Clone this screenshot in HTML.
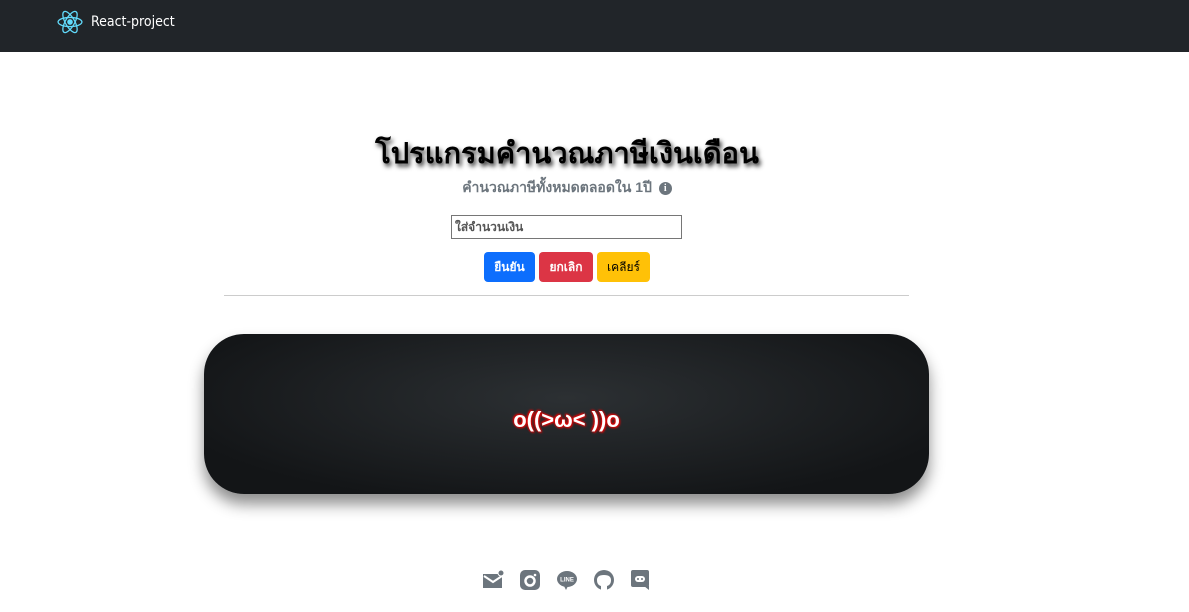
<!DOCTYPE html>
<html><head><meta charset="utf-8">
<style>
*{box-sizing:border-box;margin:0;padding:0}
body{width:1189px;height:612px;overflow:hidden;background:#fff;font-family:"Liberation Sans","Noto Sans CJK SC",sans-serif}
nav{height:52px;background:#212529;position:relative}
nav .brand{position:absolute;left:57px;top:10px;display:flex;align-items:center;color:#fff;font-size:14px}
nav .brand span{margin-left:8px;font-family:"DejaVu Sans Condensed","Liberation Sans",sans-serif}
h1{position:absolute;top:130px;left:0;width:1134px;text-align:center;font-size:29px;font-weight:bold;color:#000;text-shadow:2px 3px 5px rgba(0,0,0,.8)}
.sub{position:absolute;top:177px;width:1134px;text-align:center;color:#6c757d;font-size:14px;font-weight:bold}
.info{display:inline-block;width:13px;height:13px;border-radius:50%;background:#6c757d;color:#fff;font-size:10px;line-height:13px;text-align:center;vertical-align:1px;margin-left:3px;font-family:"Liberation Serif",serif}
input{position:absolute;left:451px;top:215px;width:231px;height:24px;border:1px solid #767676;font-size:12px;padding-left:3px;color:#555;font-weight:bold}
.btns{position:absolute;top:252px;left:484px;display:flex;gap:4px}
.btns div{height:30px;border-radius:4px;color:#fff;font-size:12px;font-weight:bold;line-height:30px;text-align:center}
hr{position:absolute;top:295px;left:224px;width:685px;border:0;border-top:1px solid #ccc}
.board{position:absolute;left:204px;top:334px;width:725px;height:160px;border-radius:40px;background:radial-gradient(ellipse at 50% 40%,#2c3033,#131517 80%);box-shadow:0 10px 15px rgba(0,0,0,.45);display:flex;align-items:center;justify-content:center;color:#fff;font-size:22px;font-weight:bold;text-shadow:0 0 2px #e00,1px 1px 2px #e00,-1px -1px 2px #e00;padding-top:12px}
.foot{position:absolute;top:570px;left:482px;display:flex;gap:15px}
.foot svg{width:22px;height:20px}
</style></head><body>
<nav><div class="brand">
<svg width="26" height="24" viewBox="-12 -11 24 22" fill="none" stroke="#61dafb" stroke-width="1.2"><circle r="2" fill="#61dafb"/><ellipse rx="11" ry="4.2"/><ellipse rx="11" ry="4.2" transform="rotate(60)"/><ellipse rx="11" ry="4.2" transform="rotate(120)"/></svg>
<span>React-project</span></div></nav>
<h1>โปรแกรมคำนวณภาษีเงินเดือน</h1>
<div class="sub">คำนวณภาษีทั้งหมดตลอดใน 1ปี <span class="info">i</span></div>
<input value="ใส่จำนวนเงิน">
<div class="btns"><div style="width:51px;background:#0d6efd">ยืนยัน</div><div style="width:54px;background:#dc3545">ยกเลิก</div><div style="width:53px;background:#ffc107;color:#000;font-weight:normal">เคลียร์</div></div>
<hr>
<div class="board">o((&gt;ω&lt; ))o</div>
<div class="foot">
<svg viewBox="0 0 22 20"><rect x="1" y="4" width="19" height="14" fill="#6c757d"/><path d="M2 6l9 6 9-6" stroke="#fff" stroke-width="2" fill="none"/><circle cx="19" cy="3" r="3" fill="#6c757d" stroke="#fff"/></svg>
<svg viewBox="0 0 22 20"><rect x="1" y="0" width="20" height="20" rx="5" fill="#6c757d"/><circle cx="11" cy="11" r="4.5" fill="none" stroke="#fff" stroke-width="2.5"/><circle cx="16" cy="5" r="1.3" fill="#fff"/></svg>
<svg viewBox="0 0 22 20"><ellipse cx="11" cy="9" rx="10" ry="8" fill="#6c757d"/><path d="M8 16l2 4 2-4" fill="#6c757d"/><text x="11" y="11.5" font-size="6" fill="#fff" text-anchor="middle" font-weight="bold" font-family="Liberation Sans">LINE</text></svg>
<svg viewBox="0 0 22 20"><circle cx="11" cy="10" r="10" fill="#6c757d"/><path d="M8 20v-4c-3-1-4-3-4-6 0-3 2-5 7-5s7 2 7 5c0 3-1 5-4 6v4z" fill="#fff"/></svg>
<svg viewBox="0 0 22 20"><rect x="1" y="0" width="18" height="17" rx="2" fill="#6c757d"/><path d="M14 16l5 4v-4z" fill="#6c757d"/><rect x="5" y="6" width="10" height="6" rx="3" fill="#fff"/><circle cx="8" cy="9" r="1" fill="#6c757d"/><circle cx="12" cy="9" r="1" fill="#6c757d"/></svg>
</div>
</body></html>
